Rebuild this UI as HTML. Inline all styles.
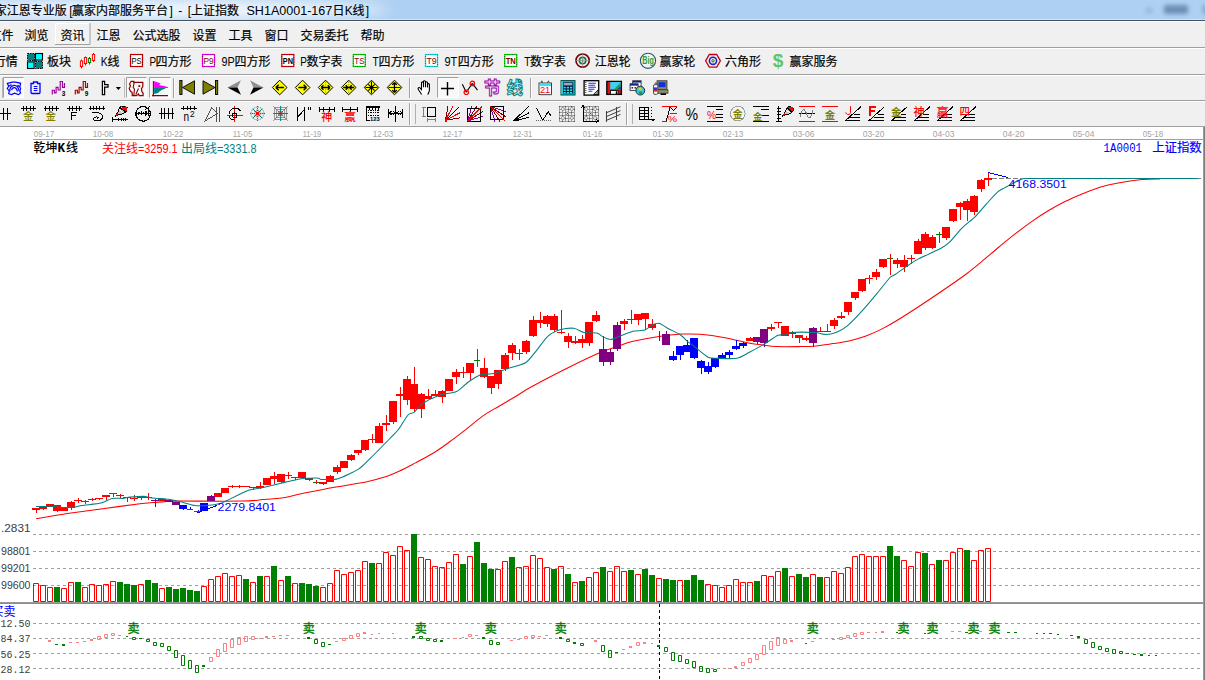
<!DOCTYPE html>
<html lang="zh"><head><meta charset="utf-8"><title>上证指数 SH1A0001-167日K线</title>
<style>
html,body{margin:0;padding:0;background:#fff;overflow:hidden}
body{width:1205px;height:680px;font-family:"Liberation Sans",sans-serif}
svg{display:block}
text{white-space:pre}
.cj{font-family:"Liberation Sans","Noto Sans CJK SC",sans-serif}
</style></head><body>
<svg width="1205" height="680" viewBox="0 0 1205 680">
<defs>
<filter id="blur3" x="-50%" y="-50%" width="200%" height="200%"><feGaussianBlur stdDeviation="2.2"/></filter>
<filter id="blur8" x="-20%" y="-100%" width="140%" height="300%"><feGaussianBlur stdDeviation="7"/></filter>
</defs>
<rect x="0" y="0" width="1205" height="680" fill="#ffffff"/>
<rect x="0" y="0" width="1205" height="20" fill="#aed0f2"/>
<ellipse cx="160" cy="10" rx="228" ry="10" fill="#ffffff" opacity="0.85" filter="url(#blur8)"/>
<rect x="0" y="19" width="1205" height="1" fill="#cfe3f7"/>
<rect x="0" y="20" width="1205" height="1" fill="#44515f"/>
<g filter="url(#blur3)"><rect x="1164" y="5" width="24" height="9" rx="2" fill="#6c8fb6"/><rect x="1146" y="8" width="6" height="5" fill="#93b4d8"/><rect x="1203" y="5" width="4" height="9" fill="#7f9fc4"/></g>
<rect x="0" y="21" width="1205" height="26" fill="#f0f0f0"/>
<rect x="0" y="21" width="1205" height="1" fill="#fafafa"/>
<rect x="0" y="47" width="1205" height="1" fill="#a0a0a0"/>
<rect x="0" y="48" width="1205" height="1" fill="#ffffff"/>
<rect x="0" y="49" width="1205" height="25" fill="#f0f0f0"/>
<rect x="0" y="74" width="1205" height="1" fill="#a0a0a0"/>
<rect x="0" y="75" width="1205" height="1" fill="#ffffff"/>
<rect x="0" y="76" width="1205" height="24" fill="#f0f0f0"/>
<rect x="0" y="100" width="1205" height="1" fill="#a0a0a0"/>
<rect x="0" y="101" width="1205" height="1" fill="#ffffff"/>
<rect x="0" y="102" width="1205" height="24" fill="#f0f0f0"/>
<rect x="0" y="126" width="1205" height="1" fill="#a0a0a0"/>
<text class="cj" x="-5.2" y="15.3" font-size="12" fill="#000" stroke="#000" stroke-width="0.17">家江恩专业版</text>
<text x="69.30" y="15.30" font-family="Liberation Sans" font-size="12" fill="#000">[</text>
<text class="cj" x="72.1" y="15.3" font-size="12" fill="#000" stroke="#000" stroke-width="0.17">赢家内部服务平台</text>
<text x="169.60" y="15.30" font-family="Liberation Sans" font-size="12" fill="#000">]</text>
<text x="178.20" y="15.30" font-family="Liberation Sans" font-size="12" fill="#000">-</text>
<text x="187.80" y="15.30" font-family="Liberation Sans" font-size="12" fill="#000">[</text>
<text class="cj" x="191.0" y="15.3" font-size="12" fill="#000" stroke="#000" stroke-width="0.17">上证指数</text>
<text x="246.50" y="15.30" font-family="Liberation Sans" font-size="12" fill="#000" textLength="85.8" lengthAdjust="spacingAndGlyphs">SH1A0001-167</text>
<text class="cj" x="332.4" y="15.3" font-size="12" fill="#000" stroke="#000" stroke-width="0.17">日</text>
<text x="344.80" y="15.30" font-family="Liberation Sans" font-size="12" fill="#000">K</text>
<text class="cj" x="352.4" y="15.3" font-size="12" fill="#000" stroke="#000" stroke-width="0.17">线</text>
<text x="365.80" y="15.30" font-family="Liberation Sans" font-size="12" fill="#000">]</text>
<text class="cj" x="-10.5" y="39.7" font-size="12" fill="#000" stroke="#000" stroke-width="0.17">文件</text>
<text class="cj" x="24.6" y="39.7" font-size="12" fill="#000" stroke="#000" stroke-width="0.17">浏览</text>
<rect x="55" y="23" width="35.5" height="22" fill="#f2f2f2"/><path d="M55.5 45V23.5H90.5" stroke="#ffffff" fill="none"/><path d="M55 44.5H90V23" stroke="#a0a0a0" fill="none"/>
<text class="cj" x="60.6" y="39.7" font-size="12" fill="#000" stroke="#000" stroke-width="0.17">资讯</text>
<text class="cj" x="96.6" y="39.7" font-size="12" fill="#000" stroke="#000" stroke-width="0.17">江恩</text>
<text class="cj" x="132.6" y="39.7" font-size="12" fill="#000" stroke="#000" stroke-width="0.17">公式选股</text>
<text class="cj" x="192.6" y="39.7" font-size="12" fill="#000" stroke="#000" stroke-width="0.17">设置</text>
<text class="cj" x="228.6" y="39.7" font-size="12" fill="#000" stroke="#000" stroke-width="0.17">工具</text>
<text class="cj" x="264.4" y="39.7" font-size="12" fill="#000" stroke="#000" stroke-width="0.17">窗口</text>
<text class="cj" x="300.6" y="39.7" font-size="12" fill="#000" stroke="#000" stroke-width="0.17">交易委托</text>
<text class="cj" x="360.6" y="39.7" font-size="12" fill="#000" stroke="#000" stroke-width="0.17">帮助</text>
<text class="cj" x="-6.2" y="66.2" font-size="12" fill="#000" stroke="#000" stroke-width="0.17">行情</text>
<text class="cj" x="47.0" y="66.2" font-size="12" fill="#000" stroke="#000" stroke-width="0.17">板块</text>
<text x="100.80" y="66.20" font-family="Liberation Sans" font-size="12" fill="#000" textLength="7" lengthAdjust="spacingAndGlyphs">K</text>
<text class="cj" x="107.4" y="66.2" font-size="12" fill="#000" stroke="#000" stroke-width="0.17">线</text>
<text x="149.40" y="66.20" font-family="Liberation Sans" font-size="12" fill="#000" textLength="6.6" lengthAdjust="spacingAndGlyphs">P</text>
<text class="cj" x="155.6" y="66.2" font-size="12" fill="#000" stroke="#000" stroke-width="0.17">四方形</text>
<text x="221.60" y="66.20" font-family="Liberation Sans" font-size="12" fill="#000" textLength="13.2" lengthAdjust="spacingAndGlyphs">9P</text>
<text class="cj" x="234.6" y="66.2" font-size="12" fill="#000" stroke="#000" stroke-width="0.17">四方形</text>
<text x="300.20" y="66.20" font-family="Liberation Sans" font-size="12" fill="#000" textLength="6.6" lengthAdjust="spacingAndGlyphs">P</text>
<text class="cj" x="306.6" y="66.2" font-size="12" fill="#000" stroke="#000" stroke-width="0.17">数字表</text>
<text x="372.40" y="66.20" font-family="Liberation Sans" font-size="12" fill="#000" textLength="6.2" lengthAdjust="spacingAndGlyphs">T</text>
<text class="cj" x="378.6" y="66.2" font-size="12" fill="#000" stroke="#000" stroke-width="0.17">四方形</text>
<text x="444.40" y="66.20" font-family="Liberation Sans" font-size="12" fill="#000" textLength="12.8" lengthAdjust="spacingAndGlyphs">9T</text>
<text class="cj" x="457.8" y="66.2" font-size="12" fill="#000" stroke="#000" stroke-width="0.17">四方形</text>
<text x="524.20" y="66.20" font-family="Liberation Sans" font-size="12" fill="#000" textLength="6.2" lengthAdjust="spacingAndGlyphs">T</text>
<text class="cj" x="530.0" y="66.2" font-size="12" fill="#000" stroke="#000" stroke-width="0.17">数字表</text>
<text class="cj" x="594.8" y="66.2" font-size="12" fill="#000" stroke="#000" stroke-width="0.17">江恩轮</text>
<text class="cj" x="659.5" y="66.2" font-size="12" fill="#000" stroke="#000" stroke-width="0.17">赢家轮</text>
<text class="cj" x="725.0" y="66.2" font-size="12" fill="#000" stroke="#000" stroke-width="0.17">六角形</text>
<text class="cj" x="789.5" y="66.2" font-size="12" fill="#000" stroke="#000" stroke-width="0.17">赢家服务</text>
<g transform="translate(27,53)"><rect x="0.5" y="0.5" width="7" height="7" fill="#008080" stroke="#000" stroke-width="1" stroke-dasharray="1.5 1"/><rect x="8.5" y="0.5" width="7" height="6.6" fill="#00ffff" stroke="#000" stroke-width="1.1"/><rect x="0.5" y="8.9" width="6.6" height="6.6" fill="#00ffff" stroke="#000" stroke-width="1.1"/><rect x="8.5" y="8.5" width="7" height="7" fill="#008080" stroke="#000" stroke-width="1" stroke-dasharray="1.5 1"/><rect x="6.8" y="6.8" width="2.2" height="2.2" fill="#003c3c" stroke="none" stroke-width="1"/></g>
<g transform="translate(0,0)"><path d="M81.5 59.5V61M81.5 66.5V68.5" stroke="#ff0000" stroke-width="1" fill="none"/><rect x="80.4" y="61" width="2.2" height="5.5" fill="#fff" stroke="#ff0000" stroke-width="1"/><path d="M85.5 56.5V57.5M85.5 63.5V65.5" stroke="#ff0000" stroke-width="1" fill="none"/><rect x="84.4" y="57.5" width="2.2" height="6.0" fill="#fff" stroke="#ff0000" stroke-width="1"/><path d="M89.5 57V58.5M89.5 62.5V64.5" stroke="#008000" stroke-width="1" fill="none"/><rect x="88.4" y="58.5" width="2.2" height="4.0" fill="#fff" stroke="#008000" stroke-width="1"/><path d="M93.5 53V54.5M93.5 60.5V62" stroke="#ff0000" stroke-width="1" fill="none"/><rect x="92.4" y="54.5" width="2.2" height="6.0" fill="#fff" stroke="#ff0000" stroke-width="1"/></g>
<g transform="translate(130,54)"><rect x="0.5" y="0.5" width="12" height="12" fill="#fff" stroke="#e00000" stroke-width="1.2"/><rect x="0.5" y="0.5" width="12" height="12" fill="none" stroke="#000" stroke-width="1.2" stroke-dasharray="1 1.4" opacity="0.45"/><text x="1.5" y="10.2" font-family="Liberation Sans" font-size="9.6" font-weight="normal" fill="#000" textLength="10.2" lengthAdjust="spacingAndGlyphs">PS</text></g>
<g transform="translate(202,54)"><rect x="0.5" y="0.5" width="12" height="12" fill="#fff" stroke="#ff00ff" stroke-width="1.2"/><rect x="0.5" y="0.5" width="12" height="12" fill="none" stroke="#000" stroke-width="1.2" stroke-dasharray="1 1.4" opacity="0.45"/><text x="1.5" y="10.2" font-family="Liberation Sans" font-size="9.6" font-weight="normal" fill="#800000" textLength="10.2" lengthAdjust="spacingAndGlyphs">P9</text></g>
<g transform="translate(281.3,54)"><rect x="0.5" y="0.5" width="12" height="12" fill="#fff" stroke="#e00000" stroke-width="1.2"/><rect x="0.5" y="0.5" width="12" height="12" fill="none" stroke="#000" stroke-width="1.2" stroke-dasharray="1 1.4" opacity="0.45"/><text x="1.5" y="10.2" font-family="Liberation Sans" font-size="9.6" font-weight="bold" fill="#000" textLength="10.2" lengthAdjust="spacingAndGlyphs">PN</text></g>
<g transform="translate(352.8,54)"><rect x="0.5" y="0.5" width="12" height="12" fill="#fff" stroke="#00e000" stroke-width="1.2"/><rect x="0.5" y="0.5" width="12" height="12" fill="none" stroke="#000" stroke-width="1.2" stroke-dasharray="1 1.4" opacity="0.45"/><text x="1.5" y="10.2" font-family="Liberation Sans" font-size="9.6" font-weight="normal" fill="#800000" textLength="10.2" lengthAdjust="spacingAndGlyphs">TS</text></g>
<g transform="translate(425,54)"><rect x="0.5" y="0.5" width="12" height="12" fill="#fff" stroke="#00f0f0" stroke-width="1.2"/><rect x="0.5" y="0.5" width="12" height="12" fill="none" stroke="#000" stroke-width="1.2" stroke-dasharray="1 1.4" opacity="0.45"/><text x="1.5" y="10.2" font-family="Liberation Sans" font-size="9.6" font-weight="normal" fill="#800000" textLength="10.2" lengthAdjust="spacingAndGlyphs">T9</text></g>
<g transform="translate(504.2,54)"><rect x="0.5" y="0.5" width="12" height="12" fill="#fff" stroke="#00e000" stroke-width="1.2"/><rect x="0.5" y="0.5" width="12" height="12" fill="none" stroke="#000" stroke-width="1.2" stroke-dasharray="1 1.4" opacity="0.45"/><text x="1.5" y="10.2" font-family="Liberation Sans" font-size="9.6" font-weight="bold" fill="#800000" textLength="10.2" lengthAdjust="spacingAndGlyphs">TN</text></g>
<g transform="translate(582.6,60.6)"><circle r="6.6" fill="none" stroke="#800000" stroke-width="1.7"/><circle r="3.2" fill="none" stroke="#008040" stroke-width="1.6"/><circle r="1.2" fill="#ff6060"/><path d="M-7 0H7M0 -7V7" stroke="#909090" stroke-width="0.8" fill="none"/></g>
<g transform="translate(648,60.8)"><circle r="7.6" fill="#f4f4f4" stroke="#1f5a7a" stroke-width="1.1"/><text x="-5.8" y="3.3" font-family="Liberation Sans" font-size="10" font-weight="bold" fill="#2f9e2f" textLength="11.6" lengthAdjust="spacingAndGlyphs">Big</text></g>
<g transform="translate(713,60.8)"><path d="M-7.4 0L-3.7 -6.3H3.7L7.4 0L3.7 6.3H-3.7Z" stroke="#c00020" stroke-width="1.3" fill="none"/><circle r="3.6" fill="none" stroke="#2020c0" stroke-width="1.6"/><circle r="1.2" fill="#fff" stroke="#008000" stroke-width="1"/></g>
<g transform="translate(0,0)"><text x="772.8" y="66.6" font-family="Liberation Sans" font-size="19" font-weight="bold" fill="#62c462" textLength="10.6" lengthAdjust="spacingAndGlyphs">$</text></g>
<rect x="2" y="78" width="1" height="20" fill="#b8b8b8"/>
<rect x="3" y="77" width="21" height="21" fill="#f8f8f8"/><path d="M3.5 98V77.5H24" stroke="#a0a0a0" fill="none"/><path d="M3.5 97.5H23.5V77.5" stroke="#ffffff" fill="none"/>
<g transform="translate(7,81)"><path d="M0.3 2.3L5.5 1.1H8.7L13.6 2.3L12.8 6L13.6 7.5L12.8 10.1L13.6 11.9L11.6 13.6L7.5 12.2L4.6 13.6L1.7 12.7L2.3 10.1L0.3 7.5L1.7 5.2Z" stroke="#0000ff" stroke-width="1.2" fill="none"/><path d="M2.9 10.4C2.6 8 3.5 5 7 4.3C10 4 11.5 7 12.2 10.1M4.6 9.2C5 7.4 6 6.6 7.2 6.6C8.8 6.6 10 8.4 10.4 10.7M1.7 5.2L4.5 3.5M12.8 6L10.5 4.2" stroke="#0000ff" stroke-width="1.2" fill="none"/></g>
<g transform="translate(30,81)"><path d="M1 2.5H3.5V1H7.5V2.5H10V11.5Q10 12.5 9 12.5H2Q1 12.5 1 11.5Z" stroke="#0000ff" stroke-width="1.3" fill="none"/><path d="M3.8 5.5H7.4M3.8 7.5H7.4M3.8 9.5H7.4" stroke="#0000ff" stroke-width="1.1" fill="none"/></g>
<g transform="translate(51.5,81)"><path d="M0.8 13.6V9.2H2.9V11.9H4.6V6.3H6.6V9H8.7V0.5H11V6.3H13V2" stroke="#a000a0" stroke-width="1.15" fill="none"/><text x="10.2" y="14.9" font-family="Liberation Sans" font-size="6.5" font-weight="bold" fill="#000" textLength="3.6" lengthAdjust="spacingAndGlyphs">3</text></g>
<g transform="translate(74.5,81)"><path d="M0.8 13.6V9.2H2.9V11.9H4.6V6.3H6.6V9H8.7V0.5H11V6.3H13V2" stroke="#a00000" stroke-width="1.15" fill="none"/><text x="10.2" y="14.9" font-family="Liberation Sans" font-size="6.5" font-weight="bold" fill="#000" textLength="3.6" lengthAdjust="spacingAndGlyphs">9</text></g>
<g transform="translate(101,81)"><path d="M1.4 0.4H3.6V3.7H7V6H3.6V13.6H1.4Z" stroke="#000" stroke-width="1.25" fill="#fff"/><path d="M14.8 6h5.2l-2.6 3z" fill="#000"/></g>
<rect x="124" y="78" width="1" height="20" fill="#c0c0c0"/>
<rect x="126" y="77" width="21" height="21" fill="#f8f8f8"/><path d="M126.5 98V77.5H147" stroke="#a0a0a0" fill="none"/><path d="M126.5 97.5H146.5V77.5" stroke="#ffffff" fill="none"/>
<g transform="translate(129,81)"><path d="M2.2 0.3H4.8V1.3H13.8V5.6L12.5 7.6L12.8 10.3L14.1 12.3V14.6H10.2L9.5 12.9L7.5 14.6H3.2V11.6L1.5 10.3L0.2 7.6L1.5 5L0.5 3Z" stroke="#8b0000" stroke-width="1.2" fill="none"/><path d="M5.2 1.3L4.2 6.3L5.5 8.3L4.8 14.3M9.5 7.6L6.8 13.6" stroke="#8b0000" stroke-width="1.1" fill="none"/><rect x="9.4" y="4.2" width="1.8" height="1.8" fill="#8b0000" stroke="none" stroke-width="1"/></g>
<rect x="149" y="77" width="22" height="21" fill="#f8f8f8"/><path d="M149.5 98V77.5H171" stroke="#a0a0a0" fill="none"/><path d="M149.5 97.5H170.5V77.5" stroke="#ffffff" fill="none"/>
<g transform="translate(152,80)"><path d="M2.1 1.2L6.1 2.6L8.7 3.6L7.1 5L13.1 6.3L16 7.3V8.1H2.1z" fill="#ff00ff"/><path d="M2.1 8.1H13.7L12.4 8.9L9.4 9.9L8.1 11.3L5.8 12.3L7.7 12.6L4.1 13.6L2.1 13.9z" fill="#008080"/><path d="M1.4 1V16.6M0.1 15.6H16M0.1 15.6L1.8 14.4" stroke="#8b0000" stroke-width="1.1" fill="none"/></g>
<rect x="173" y="78" width="1" height="20" fill="#a0a0a0"/>
<rect x="174" y="78" width="1" height="20" fill="#ffffff"/>
<g transform="translate(179,80)"><rect x="0.8" y="0.5" width="2.2" height="14" fill="#808000" stroke="#000" stroke-width="0.9"/><path d="M3.5 7.5L15.5 0.8V14.2Z" stroke="#000" stroke-width="0.9" fill="#808000"/></g>
<g transform="translate(202.5,80)"><rect x="13" y="0.5" width="2.2" height="14" fill="#808000" stroke="#000" stroke-width="0.9"/><path d="M12.5 7.5L0.5 0.8V14.2Z" stroke="#000" stroke-width="0.9" fill="#808000"/></g>
<g transform="translate(227.5,80)"><path d="M0 7.5L13.5 0.3L10 7.5z" fill="#909090"/><path d="M0 7.5L13.5 14.7L10 7.5z" fill="#000"/></g>
<g transform="translate(250,80)"><path d="M13.5 7.5L0 0.3L3.5 7.5z" fill="#909090"/><path d="M13.5 7.5L0 14.7L3.5 7.5z" fill="#000"/></g>
<g transform="translate(279.7,87.5)"><path d="M-7.3 0L0 -7.3L7.3 0L0 7.3Z" stroke="#000" stroke-width="1" fill="#ffff00"/><path d="M-4 0H4.2M-4 0L-1 -2.8M-4 0L-1 2.8" stroke="#000" stroke-width="1.3" fill="none"/></g>
<g transform="translate(302.6,87.5)"><path d="M-7.3 0L0 -7.3L7.3 0L0 7.3Z" stroke="#000" stroke-width="1" fill="#ffff00"/><path d="M4 0H-4.2M4 0L1 -2.8M4 0L1 2.8" stroke="#000" stroke-width="1.3" fill="none"/></g>
<g transform="translate(325.6,87.5)"><path d="M-7.3 0L0 -7.3L7.3 0L0 7.3Z" stroke="#000" stroke-width="1" fill="#ffff00"/><path d="M0 -6V6" stroke="#909060" stroke-width="0.8" fill="none" stroke-dasharray="1.5 1"/><path d="M-4.5 0H4.5M-4.5 0L-2.2 -2.3M-4.5 0L-2.2 2.3M4.5 0L2.2 -2.3M4.5 0L2.2 2.3" stroke="#000" stroke-width="1.3" fill="none"/></g>
<g transform="translate(348.7,87.5)"><path d="M-7.3 0L0 -7.3L7.3 0L0 7.3Z" stroke="#000" stroke-width="1" fill="#ffff00"/><path d="M0 -6V6" stroke="#909060" stroke-width="0.8" fill="none" stroke-dasharray="1.5 1"/><path d="M-5.5 0H5.5M-0.8 0L-3 -2.3M-0.8 0L-3 2.3M0.8 0L3 -2.3M0.8 0L3 2.3" stroke="#000" stroke-width="1.3" fill="none"/></g>
<g transform="translate(371.5,87.5)"><path d="M-7.3 0L0 -7.3L7.3 0L0 7.3Z" stroke="#000" stroke-width="1" fill="#ffff00"/><path d="M-6 0H6M0 -6V6M-3.2 -3.2L3.2 3.2M-3.2 3.2L3.2 -3.2" stroke="#000" stroke-width="1.1" fill="none"/></g>
<g transform="translate(394.5,87.5)"><path d="M-7.3 0L0 -7.3L7.3 0L0 7.3Z" stroke="#000" stroke-width="1" fill="#ffff00"/><path d="M-6 0H6" stroke="#000" stroke-width="0.9" fill="none"/><path d="M0 -5V5M0 -5L-2.3 -2.6M0 -5L2.3 -2.6M0 5L-2.3 2.6M0 5L2.3 2.6" stroke="#000" stroke-width="1.3" fill="none"/></g>
<rect x="409" y="78" width="1" height="20" fill="#a0a0a0"/>
<rect x="410" y="78" width="1" height="20" fill="#ffffff"/>
<g transform="translate(416.5,80)"><path d="M5.2 14.5L2 9.8C0.8 8 2.5 6.8 3.8 8.2L5 9.6V3C5 1.5 7 1.5 7 3V7.2V1.8C7 0.3 9 0.3 9 1.8V7.2V2.8C9 1.4 11 1.4 11 2.8V7.6V4.6C11 3.3 12.9 3.3 12.9 4.6V10C12.9 12 12 13 11.2 14.5" stroke="#000" stroke-width="1.1" fill="#fff"/></g>
<rect x="437" y="77" width="22" height="21" fill="#f8f8f8"/><path d="M437.5 98V77.5H459" stroke="#a0a0a0" fill="none"/><path d="M437.5 97.5H458.5V77.5" stroke="#ffffff" fill="none"/>
<g transform="translate(440,81)"><path d="M1 7.5H14M7.5 1V14.5" stroke="#000" stroke-width="1.4" fill="none"/></g>
<g transform="translate(461.5,80)"><path d="M0.8 4.2L4.8 12.3M4.8 12.3L10.8 3.4M10.8 3.4L16 10.2" stroke="#000" stroke-width="1.1" fill="none"/><circle cx="4.8" cy="12.3" r="2.2" fill="none" stroke="#ff0000" stroke-width="1.2"/><circle cx="10.8" cy="3.4" r="2.2" fill="none" stroke="#ff0000" stroke-width="1.2"/></g>
<g transform="translate(484,80)"><text class="cj" x="0" y="14" font-size="16.5" font-weight="bold" fill="#f4f4f4" stroke="#a000a0" stroke-width="0.96">节</text></g>
<g transform="translate(506.6,80)"><text class="cj" x="0" y="14" font-size="16.5" font-weight="bold" fill="#f4f4f4" stroke="#008080" stroke-width="0.96">线</text></g>
<rect x="530" y="78" width="1" height="20" fill="#a0a0a0"/>
<rect x="531" y="78" width="1" height="20" fill="#ffffff"/>
<g transform="translate(538,80)"><rect x="1" y="3" width="12.5" height="11.5" fill="#fff" stroke="#404040" stroke-width="1"/><rect x="1.5" y="3.5" width="11.5" height="2.6" fill="#40e0f0" stroke="none" stroke-width="1"/><path d="M3 3.2L3.8 0.8L4.6 3.2M9.6 3.2L10.4 0.8L11.2 3.2" stroke="#404040" stroke-width="0.9" fill="#fff"/><text x="1.9" y="13.4" font-family="Liberation Sans" font-size="9" font-weight="normal" fill="#ff0000" textLength="10.4" lengthAdjust="spacingAndGlyphs">21</text><path d="M2 14.8H14" stroke="#808080" stroke-width="0.8" fill="none"/></g>
<g transform="translate(560.4,80)"><rect x="0.6" y="0.6" width="14" height="14.4" fill="#00c8c8" stroke="#004848" stroke-width="1"/><rect x="2.4" y="2.2" width="10.4" height="11.4" fill="#001850" stroke="none" stroke-width="1"/><rect x="3.2" y="2.8" width="8.8" height="2.6" fill="#a0a8a8" stroke="none" stroke-width="1"/><rect x="3.2" y="6.8" width="2.2" height="1.6" fill="#30d8d8" stroke="none" stroke-width="1"/><rect x="3.2" y="9.4" width="2.2" height="1.6" fill="#30d8d8" stroke="none" stroke-width="1"/><rect x="3.2" y="12.0" width="2.2" height="1.6" fill="#30d8d8" stroke="none" stroke-width="1"/><rect x="6.4" y="6.8" width="2.2" height="1.6" fill="#30d8d8" stroke="none" stroke-width="1"/><rect x="6.4" y="9.4" width="2.2" height="1.6" fill="#30d8d8" stroke="none" stroke-width="1"/><rect x="6.4" y="12.0" width="2.2" height="1.6" fill="#30d8d8" stroke="none" stroke-width="1"/><rect x="9.600000000000001" y="6.8" width="2.2" height="1.6" fill="#30d8d8" stroke="none" stroke-width="1"/><rect x="9.600000000000001" y="9.4" width="2.2" height="1.6" fill="#30d8d8" stroke="none" stroke-width="1"/><rect x="9.600000000000001" y="12.0" width="2.2" height="1.6" fill="#30d8d8" stroke="none" stroke-width="1"/><path d="M1.6 1.2V14" stroke="#60f0f0" stroke-width="1" fill="none"/></g>
<g transform="translate(583.4,80)"><rect x="0.7" y="0.7" width="14.6" height="14.4" fill="#fff" stroke="#000" stroke-width="1.3"/><path d="M2.4 2V14" stroke="#404040" stroke-width="1.2" fill="none" stroke-dasharray="1 1"/><path d="M5 3.2H12.5M5 5.2H11.5M5 7.2H12.5M5 9.2H11M5 11.2H9" stroke="#2030e0" stroke-width="1.1" fill="none"/><path d="M10 14.5L14.8 9.8V14.5z" fill="#a0a0a0" stroke="#000" stroke-width="0.8"/></g>
<g transform="translate(606,80)"><rect x="0.8" y="1.4" width="14.6" height="13" fill="#e01010" stroke="#000" stroke-width="1.3"/><rect x="4.2" y="2" width="10.6" height="7.2" fill="#40d0f0" stroke="none" stroke-width="1"/><path d="M14.8 2.5L8 9.2H14.8z" fill="#20a040"/><path d="M14.8 6L11.5 9.2H14.8z" fill="#1030c0"/><rect x="4.6" y="10.6" width="7.6" height="3.6" fill="#fff" stroke="#000" stroke-width="0.8"/><rect x="9.8" y="11.2" width="1.6" height="3" fill="#000" stroke="none" stroke-width="1"/></g>
<g transform="translate(629.5,80)"><rect x="3.2" y="0.8" width="8.4" height="7" fill="#fff" stroke="#303030" stroke-width="0.9"/><rect x="3.2" y="0.8" width="8.4" height="1.8" fill="#102080" stroke="none" stroke-width="1"/><rect x="0.6" y="3.8" width="8" height="6.6" fill="#fff" stroke="#303030" stroke-width="0.9"/><rect x="0.6" y="3.8" width="8" height="1.8" fill="#102080" stroke="none" stroke-width="1"/><rect x="2" y="7" width="1.6" height="1.6" fill="#303030" stroke="none" stroke-width="1"/><rect x="5" y="7" width="1.6" height="1.6" fill="#303030" stroke="none" stroke-width="1"/><circle cx="10.8" cy="10.6" r="4.4" fill="#30c8d8" stroke="#203040" stroke-width="1"/><path d="M8.5 8.5L11 7.5L13 9L11.5 10.5L9.5 10z" fill="#e0d020"/><path d="M9 12L11.5 11.5L13 13L10.8 14.6z" fill="#209040"/></g>
<g transform="translate(652.5,80)"><rect x="4.6" y="0.8" width="9.8" height="8.6" fill="#909070" stroke="#404030" stroke-width="1"/><rect x="6" y="2.2" width="7" height="5" fill="#1030e0" stroke="none" stroke-width="1"/><rect x="4" y="9.8" width="11.4" height="3.4" fill="#909070" stroke="#404030" stroke-width="0.9"/><rect x="8" y="13.4" width="5.5" height="1.6" fill="#000" stroke="none" stroke-width="1"/><rect x="1" y="4.6" width="4.4" height="9.8" fill="#f4f4f4" stroke="#404040" stroke-width="0.9" rx="1.5"/><rect x="1.4" y="7.4" width="3.6" height="2.6" fill="#2040d0" stroke="none" stroke-width="1"/><rect x="1.4" y="10" width="3.6" height="1.6" fill="#e02020" stroke="none" stroke-width="1"/><path d="M2 4.4L3.2 2.6L4.4 4.4" stroke="#404040" stroke-width="0.9" fill="none"/></g>
<g transform="translate(0,106)" shape-rendering="crispEdges"><path d="M0 7.5H11.3M3.2 2V13.5M7.6 2V13.5" stroke="#000" stroke-width="1" fill="none"/></g>
<g transform="translate(20.5,106)" shape-rendering="crispEdges"><path d="M0.5 2.8H15.5M2.7 0.3999999999999999V5.199999999999999M5.9 0.3999999999999999V5.199999999999999M9.7 0.3999999999999999V5.199999999999999M12.9 0.3999999999999999V5.199999999999999" stroke="#000" stroke-width="1" fill="none"/><text class="cj" x="2.4" y="14.4" font-size="10.5" font-weight="500" fill="#808000">金</text></g>
<g transform="translate(43,106)" shape-rendering="crispEdges"><path d="M0.5 2.8H15.5M2.7 0.3999999999999999V5.199999999999999M6.2 0.3999999999999999V5.199999999999999M9.4 0.3999999999999999V5.199999999999999M13.2 0.3999999999999999V5.199999999999999" stroke="#000" stroke-width="1" fill="none"/><text class="cj" x="2.4" y="14.4" font-size="10.5" font-weight="500" fill="#808000">金</text></g>
<g transform="translate(66.3,106)" shape-rendering="crispEdges"><path d="M0.5 2.8H15.5M2.7 0.3999999999999999V5.199999999999999M5.9 0.3999999999999999V5.199999999999999M9.7 0.3999999999999999V5.199999999999999M12.9 0.3999999999999999V5.199999999999999" stroke="#000" stroke-width="1" fill="none"/><path d="M5.5 13.5V6.2H11M5.5 9.6H10" stroke="#000" stroke-width="1" fill="none"/></g>
<g transform="translate(89.5,106)" shape-rendering="crispEdges"><path d="M-0.6 2.1H15.4M0.9 0.1V4.4M3.8 0.1V4.4M7 0.1V4.4M10.2 0.1V4.4M14.3 0.1V4.4" stroke="#000" stroke-width="1" fill="none"/><path d="M2.1 6.8H9C11.9 7 13.7 9.4 13.1 11.7C11.9 14.8 7.9 15.6 5 14.6C3.2 13.6 3.6 11.7 6.1 11.1C9 10.5 9.2 12.3 7.6 12.6" stroke="#000" stroke-width="1" fill="none"/></g>
<g transform="translate(112,106)" shape-rendering="crispEdges"><g transform="translate(0,0) scale(1.0)"><path d="M3.4 10.2L6.3 5.3L8 1.2L9.8 0.1L15 1.8L14.7 4.7L12.7 6.8L9.2 8.5L5.7 9.1z" fill="#c8c8c8" stroke="#000" stroke-width="1"/><path d="M9.2 0.2L12.7 1.2L13.6 0.1L15 1.8L14.7 4.7L12.7 5.2L9.8 2.2z" fill="#ff0000"/><path d="M8 1.4L13.2 5.8" stroke="#000" stroke-width="1.3"/><path d="M7.2 3.4L11.5 7.2" stroke="#fff" stroke-width="1"/><path d="M3.2 10.4L5.1 7L6.9 7.9L5.7 9.1z" fill="#ff0000"/></g><path d="M0.2 13.4H15.9M0.5 11.1V15.8M6.6 11.6V15.2M9.8 11.6V15.2M11.5 11.6V15.2M13.6 11.6V15.2" stroke="#000" stroke-width="1" fill="none"/></g>
<g transform="translate(135.5,106)" shape-rendering="crispEdges"><circle cx="7.6" cy="7.9" r="7.3" fill="none" stroke="#000" stroke-width="1.2"/><path d="M0.5 7H14.6M2.6 5.6V8.6M4.4 6V8M6 4.8V9.4M7.8 5.6V8.4M9.6 4.6V9.6M11.2 5.4V8.6M12.8 4.4V9.8" stroke="#000" stroke-width="1" fill="none"/><path d="M10 3.6L14.4 0.4" stroke="#000" stroke-width="1" fill="none"/></g>
<g transform="translate(158,106)" shape-rendering="crispEdges"><path d="M0.5 7.5H15.8M3.1 2V13.2M6.9 2V13.2M10.6 2V13.2M14 2V13.2" stroke="#000" stroke-width="1" fill="none"/></g>
<g transform="translate(181,106)" shape-rendering="crispEdges"><path d="M0.3 2.2H15.6M2.5 0.20000000000000018V4.2M6 0.20000000000000018V4.2M9.8 0.20000000000000018V4.2M13.2 0.20000000000000018V4.2" stroke="#000" stroke-width="1" fill="none"/><text x="2.6" y="15.4" font-family="Liberation Sans" font-size="12" font-weight="normal" fill="#000" textLength="5.6" lengthAdjust="spacingAndGlyphs">n</text><text x="9" y="10.6" font-family="Liberation Sans" font-size="8.5" font-weight="normal" fill="#000" textLength="4.6" lengthAdjust="spacingAndGlyphs">2</text></g>
<g transform="translate(204.5,106)" shape-rendering="crispEdges"><path d="M0.5 15L13 7.5L7 1.8Z" stroke="#505050" stroke-width="1" fill="none"/><path d="M11.6 0.5V15.5M15.4 0.5V15.5" stroke="#505050" stroke-width="1" fill="none"/></g>
<g transform="translate(227,106)" shape-rendering="crispEdges"><path d="M0 9.3H15.8M7.6 0V15.5" stroke="#ff0000" stroke-width="1" fill="none"/><circle cx="7.6" cy="9.3" r="2.3" fill="none" stroke="#000" stroke-width="1.1"/><path d="M13.5 5C11 0.5 3 1.5 2 8C1.5 11 3.5 13.5 6.5 14" stroke="#000" stroke-width="1" fill="none"/></g>
<g transform="translate(249.7,106)"><circle cx="7.8" cy="7.5" r="3.4" fill="none" stroke="#505050" stroke-width="0.8" stroke-dasharray="1 1"/><circle cx="7.8" cy="7.5" r="6.4" fill="none" stroke="#505050" stroke-width="0.8" stroke-dasharray="1 1"/><path d="M0.3 7.5H15.3M7.8 0V15" stroke="#ff0000" stroke-width="0.9" fill="none" stroke-dasharray="1.2 0.8"/><path d="M3 2.7L12.6 12.3M12.6 2.7L3 12.3" stroke="#008080" stroke-width="1.0" fill="none"/><path d="M5.8 5.5L9.8 9.5M9.8 5.5L5.8 9.5" stroke="#ff0000" stroke-width="1.2" fill="none"/><rect x="6.8" y="6.5" width="2" height="2" fill="#ff0000" stroke="none" stroke-width="1"/></g>
<g transform="translate(272.8,106)"><rect x="5.8" y="5.5" width="4" height="4" fill="none" stroke="#909090" stroke-width="0.9"/><rect x="3.8" y="3.5" width="8" height="8" fill="none" stroke="#909090" stroke-width="0.9"/><rect x="1.7999999999999998" y="1.5" width="12" height="12" fill="none" stroke="#909090" stroke-width="0.9"/><path d="M0.3 7.5H15.3M7.8 0V15" stroke="#008080" stroke-width="1.0" fill="none"/><path d="M0.8 0.5L14.8 14.5M14.8 0.5L0.8 14.5" stroke="#ff0000" stroke-width="1.0" fill="none" stroke-dasharray="1.2 0.9"/><rect x="6.8" y="6.5" width="2" height="2" fill="#ff0000" stroke="none" stroke-width="1"/></g>
<g transform="translate(297,106)" shape-rendering="crispEdges"><path d="M0.6 1.2V15M7.6 1.2V15M0.6 11L7.6 3.5M11 1.2V3.8M13.5 1.2V3.8" stroke="#000" stroke-width="1" fill="none"/></g>
<g transform="translate(319,106)" shape-rendering="crispEdges"><path d="M0.4 3H15.6M0.8 0.6V5.6M4.6 0.6V5.6M10.8 0.6V5.6M15.2 0.6V5.6" stroke="#000" stroke-width="1" fill="none"/><text class="cj" x="2.2" y="15.2" font-size="11" font-weight="500" fill="#ff0000">神</text></g>
<g transform="translate(342,106)" shape-rendering="crispEdges"><path d="M0.4 3H15.6M0.8 0.6V5.6M8 0.6V5.6M15.2 0.6V5.6" stroke="#000" stroke-width="1" fill="none"/><text class="cj" x="2.2" y="15.2" font-size="11.5" font-weight="500" fill="#ff0000">赢</text></g>
<g transform="translate(365.5,106)" shape-rendering="crispEdges"><path d="M0.3 1.2H14.2" stroke="#000" stroke-width="1.8" fill="none"/><path d="M1 1V14.6H4" stroke="#000" stroke-width="1" fill="none"/><path d="M2.5 4H14M2.5 6.6H14M2.5 9.2H14" stroke="#000" stroke-width="1" fill="none" stroke-dasharray="1.3 1"/><path d="M3.5 1.5V4M6.5 1.5V4M9.5 1.5V4M12.5 1.5V4" stroke="#000" stroke-width="1" fill="none"/><text x="4.6" y="15.2" font-family="Liberation Sans" font-size="5.5" font-weight="bold" fill="#000" textLength="9.6" lengthAdjust="spacingAndGlyphs">123</text></g>
<g transform="translate(387.6,106)" shape-rendering="crispEdges"><path d="M0.7 2.5V11.8M8.2 0V15.5M15 2.5V11.8" stroke="#000" stroke-width="1" fill="none"/><path d="M1.5 7H14.5M1.5 7L3.8 5.2M1.5 7L3.8 8.8M7.4 7L5.2 5.2M7.4 7L5.2 8.8M9 7L11.2 5.2M9 7L11.2 8.8M14.4 7L12.2 5.2M14.4 7L12.2 8.8" stroke="#000" stroke-width="1" fill="none"/></g>
<rect x="409" y="103" width="1" height="22" fill="#a0a0a0"/>
<rect x="410" y="103" width="1" height="22" fill="#ffffff"/>
<rect x="415" y="104" width="1" height="20" fill="#b0b0b0"/>
<g transform="translate(421.5,106)" shape-rendering="crispEdges"><rect x="5.5" y="1.2" width="8.6" height="9.4" fill="none" stroke="#000" stroke-width="1"/><path d="M0.3 1.2H4M0.3 10.6H4M2 1.2V10.6M5.5 12V15.5M14.1 12V15.5M5.5 13.8H14.1" stroke="#808080" stroke-width="1" fill="none"/></g>
<g transform="translate(444.5,106)" shape-rendering="crispEdges"><path d="M1 14.3L3.5 0" stroke="#800000" stroke-width="1" fill="none"/><path d="M1 14.3L8.5 0" stroke="#ff0000" stroke-width="1" fill="none"/><path d="M1 14.3L14.7 0.6" stroke="#000" stroke-width="1" fill="none"/><path d="M1 14.3L15.3 6.8" stroke="#ff0000" stroke-width="1" fill="none"/><path d="M1 14.3L15.3 11.8" stroke="#800000" stroke-width="1" fill="none"/><rect x="0" y="13" width="2.6" height="2.6" fill="#ff0000" stroke="none" stroke-width="1"/></g>
<g transform="translate(467,106)" shape-rendering="crispEdges"><path d="M0.6 15L5 0" stroke="#8000a0" stroke-width="1" fill="none"/><path d="M0.6 15L10 0" stroke="#800000" stroke-width="1" fill="none"/><path d="M0.6 15L15.6 5.6" stroke="#800000" stroke-width="1" fill="none"/><path d="M0.6 15L15.6 10.6" stroke="#8000a0" stroke-width="1" fill="none"/><rect x="0.6" y="2.5" width="13.2" height="12.5" fill="none" stroke="#000" stroke-width="1"/><path d="M0.6 15L15 0.6" stroke="#ff0000" stroke-width="1" fill="none"/></g>
<g transform="translate(490,106)" shape-rendering="crispEdges"><path d="M0.4 0.6L5 15.5" stroke="#8000a0" stroke-width="1" fill="none"/><path d="M0.4 0.6L10 15.5" stroke="#800000" stroke-width="1" fill="none"/><path d="M0.4 0.6L15.8 5.5" stroke="#8000a0" stroke-width="1" fill="none"/><path d="M0.4 0.6L15.8 10.8" stroke="#800000" stroke-width="1" fill="none"/><rect x="0.6" y="0.6" width="13.2" height="12.4" fill="none" stroke="#000" stroke-width="1"/><path d="M0.4 0.6L15.4 15.4" stroke="#ff0000" stroke-width="1" fill="none"/></g>
<g transform="translate(513,106)" shape-rendering="crispEdges"><path d="M0.5 15L16 0M0.5 15L16 6.8M0.5 15L16 11.2" stroke="#000" stroke-width="1" fill="none"/><path d="M0 15.4L5.5 11.5L5.8 14.6z" fill="#000"/></g>
<g transform="translate(536,106)" shape-rendering="crispEdges"><path d="M0.5 1.8L6.7 14.3L12.3 5.5L14.8 10" stroke="#000" stroke-width="1" fill="none"/><path d="M0 14.8H15" stroke="#606060" stroke-width="1" fill="none" stroke-dasharray="1 1"/></g>
<g transform="translate(559.3,105.5)" shape-rendering="crispEdges"><path d="M0.5 0V16M0 0.5H16M3.5 0V16M0 3.5H16M6.5 0V16M0 6.5H16M9.5 0V16M0 9.5H16M12.5 0V16M0 12.5H16M15.5 0V16M0 15.5H16" stroke="#9a9a9a" stroke-width="1" fill="none"/><rect x="0" y="0" width="1" height="1" fill="#ff0000" stroke="none" stroke-width="1"/><rect x="0" y="6" width="1" height="1" fill="#ff0000" stroke="none" stroke-width="1"/><rect x="0" y="12" width="1" height="1" fill="#ff0000" stroke="none" stroke-width="1"/><rect x="3" y="3" width="1" height="1" fill="#ff0000" stroke="none" stroke-width="1"/><rect x="3" y="9" width="1" height="1" fill="#ff0000" stroke="none" stroke-width="1"/><rect x="3" y="15" width="1" height="1" fill="#ff0000" stroke="none" stroke-width="1"/><rect x="6" y="0" width="1" height="1" fill="#ff0000" stroke="none" stroke-width="1"/><rect x="6" y="6" width="1" height="1" fill="#ff0000" stroke="none" stroke-width="1"/><rect x="6" y="12" width="1" height="1" fill="#ff0000" stroke="none" stroke-width="1"/><rect x="9" y="3" width="1" height="1" fill="#ff0000" stroke="none" stroke-width="1"/><rect x="9" y="9" width="1" height="1" fill="#ff0000" stroke="none" stroke-width="1"/><rect x="9" y="15" width="1" height="1" fill="#ff0000" stroke="none" stroke-width="1"/><rect x="12" y="0" width="1" height="1" fill="#ff0000" stroke="none" stroke-width="1"/><rect x="12" y="6" width="1" height="1" fill="#ff0000" stroke="none" stroke-width="1"/><rect x="12" y="12" width="1" height="1" fill="#ff0000" stroke="none" stroke-width="1"/><rect x="15" y="3" width="1" height="1" fill="#ff0000" stroke="none" stroke-width="1"/><rect x="15" y="9" width="1" height="1" fill="#ff0000" stroke="none" stroke-width="1"/><rect x="15" y="15" width="1" height="1" fill="#ff0000" stroke="none" stroke-width="1"/><circle cx="3.5" cy="3.5" r="1.6" fill="#e8e8e8" stroke="#808080" stroke-width="0.7" shape-rendering="auto"/><circle cx="12.5" cy="3.5" r="1.6" fill="#e8e8e8" stroke="#808080" stroke-width="0.7" shape-rendering="auto"/><circle cx="3.5" cy="12.5" r="1.6" fill="#e8e8e8" stroke="#808080" stroke-width="0.7" shape-rendering="auto"/><circle cx="12.5" cy="12.5" r="1.6" fill="#e8e8e8" stroke="#808080" stroke-width="0.7" shape-rendering="auto"/><circle cx="8" cy="8" r="1.6" fill="#e8e8e8" stroke="#808080" stroke-width="0.7" shape-rendering="auto"/><rect x="7.5" y="7.5" width="1" height="1" fill="#ff0000" stroke="none" stroke-width="1"/></g>
<g transform="translate(582.6,105.5)" shape-rendering="crispEdges"><path d="M0.5 0V16M0 0.5H16M3.5 0V16M0 3.5H16M6.5 0V16M0 6.5H16M9.5 0V16M0 9.5H16M12.5 0V16M0 12.5H16M15.5 0V16M0 15.5H16" stroke="#9a9a9a" stroke-width="1" fill="none"/><rect x="0" y="0" width="1" height="1" fill="#ff0000" stroke="none" stroke-width="1"/><rect x="0" y="6" width="1" height="1" fill="#ff0000" stroke="none" stroke-width="1"/><rect x="0" y="12" width="1" height="1" fill="#ff0000" stroke="none" stroke-width="1"/><rect x="3" y="3" width="1" height="1" fill="#ff0000" stroke="none" stroke-width="1"/><rect x="3" y="9" width="1" height="1" fill="#ff0000" stroke="none" stroke-width="1"/><rect x="3" y="15" width="1" height="1" fill="#ff0000" stroke="none" stroke-width="1"/><rect x="6" y="0" width="1" height="1" fill="#ff0000" stroke="none" stroke-width="1"/><rect x="6" y="6" width="1" height="1" fill="#ff0000" stroke="none" stroke-width="1"/><rect x="6" y="12" width="1" height="1" fill="#ff0000" stroke="none" stroke-width="1"/><rect x="9" y="3" width="1" height="1" fill="#ff0000" stroke="none" stroke-width="1"/><rect x="9" y="9" width="1" height="1" fill="#ff0000" stroke="none" stroke-width="1"/><rect x="9" y="15" width="1" height="1" fill="#ff0000" stroke="none" stroke-width="1"/><rect x="12" y="0" width="1" height="1" fill="#ff0000" stroke="none" stroke-width="1"/><rect x="12" y="6" width="1" height="1" fill="#ff0000" stroke="none" stroke-width="1"/><rect x="12" y="12" width="1" height="1" fill="#ff0000" stroke="none" stroke-width="1"/><rect x="15" y="3" width="1" height="1" fill="#ff0000" stroke="none" stroke-width="1"/><rect x="15" y="9" width="1" height="1" fill="#ff0000" stroke="none" stroke-width="1"/><rect x="15" y="15" width="1" height="1" fill="#ff0000" stroke="none" stroke-width="1"/><circle cx="3.5" cy="3.5" r="1.6" fill="#e8e8e8" stroke="#808080" stroke-width="0.7" shape-rendering="auto"/><circle cx="12.5" cy="3.5" r="1.6" fill="#e8e8e8" stroke="#808080" stroke-width="0.7" shape-rendering="auto"/><circle cx="3.5" cy="12.5" r="1.6" fill="#e8e8e8" stroke="#808080" stroke-width="0.7" shape-rendering="auto"/><circle cx="12.5" cy="12.5" r="1.6" fill="#e8e8e8" stroke="#808080" stroke-width="0.7" shape-rendering="auto"/><circle cx="8" cy="8" r="1.6" fill="#e8e8e8" stroke="#808080" stroke-width="0.7" shape-rendering="auto"/><rect x="7.5" y="7.5" width="1" height="1" fill="#ff0000" stroke="none" stroke-width="1"/><path d="M0.5 0V15.5H16M0.5 0L-1 2.5M0.5 0L2 2.5M16 15.5L13.5 14M16 15.5L13.5 17" stroke="#000" stroke-width="1" fill="none"/></g>
<g transform="translate(605.4,106)" shape-rendering="crispEdges"><path d="M0.5 7L15 0.8M0.5 10.8L15 4.6M0.5 14.6L15 8.4" stroke="#404040" stroke-width="1" fill="none" shape-rendering="auto"/><path d="M0.6 4.5V15.5M11.5 0.5V14" stroke="#404040" stroke-width="1" fill="none"/></g>
<rect x="626" y="103" width="1" height="22" fill="#a0a0a0"/>
<rect x="627" y="103" width="1" height="22" fill="#ffffff"/>
<rect x="632" y="104" width="1" height="20" fill="#b0b0b0"/>
<g transform="translate(638.8,106)" shape-rendering="crispEdges"><path d="M0.5 1.5H9.5M0.5 4.5H9.5M0.5 7.5H9.5M0.5 10.5H9.5M0.5 13.5H14.5M9.5 0.5V14M0.5 1V14M5.5 1V14" stroke="#000" stroke-width="1" fill="none"/><path d="M12 1.5H14.5M12 4.6H14.5M12 7.6H14.5M12 10.6H14.5" stroke="#000" stroke-width="1" fill="none" stroke-dasharray="1 0.8"/><path d="M13.8 12.6L15.4 13.8L13.8 15" stroke="#000" stroke-width="1" fill="none"/></g>
<g transform="translate(661.5,106)" shape-rendering="crispEdges"><path d="M0 0.8H15.6M8 7H15.6M0 15.3H5.6" stroke="#ff0000" stroke-width="1" fill="none"/><path d="M4.8 15L8.6 1.2L11.8 4.4L15.4 1.2" stroke="#000" stroke-width="1" fill="none"/><text x="6" y="15.6" font-family="Liberation Sans" font-size="9.5" font-weight="normal" fill="#ff0000" textLength="9.6" lengthAdjust="spacingAndGlyphs">%</text></g>
<g transform="translate(0,0)" shape-rendering="crispEdges"><text x="685.6" y="120.2" font-family="Liberation Sans" font-size="16" font-weight="normal" fill="#000" textLength="12.6" lengthAdjust="spacingAndGlyphs">%</text></g>
<g transform="translate(707,106)" shape-rendering="crispEdges"><path d="M0 0.8H16M9.2 3.6H16M9.2 8.2H16M9.2 11.2H16M0 15.2H16" stroke="#000" stroke-width="1" fill="none"/><text x="0" y="13.4" font-family="Liberation Sans" font-size="10" font-weight="normal" fill="#ff0000" textLength="9.2" lengthAdjust="spacingAndGlyphs">%</text></g>
<g transform="translate(729.8,106)" shape-rendering="crispEdges"><circle cx="8" cy="7.6" r="7.3" fill="#f4f4f4" stroke="#a0a0a0" stroke-width="1.1"/><text class="cj" x="3" y="11.6" font-size="10" font-weight="bold" fill="#808000">金</text></g>
<g transform="translate(753,106)" shape-rendering="crispEdges"><path d="M0 0.8H15.8M8 3.6H15.8M9.4 9.4H15.8M0 15.2H15.8" stroke="#000" stroke-width="1" fill="none"/><text class="cj" x="0" y="13.8" font-size="9.5" font-weight="bold" fill="#808000">金</text></g>
<g transform="translate(776,106)" shape-rendering="crispEdges"><path d="M2.7 0V15.6M0.5 2.5H5M0.5 5.5H5M0.5 8.8H5M0.5 12H5M0 15.2H5.5" stroke="#000" stroke-width="1" fill="none"/><g transform="translate(3.2,0.5) scale(0.95)"><path d="M3.4 10.2L6.3 5.3L8 1.2L9.8 0.1L15 1.8L14.7 4.7L12.7 6.8L9.2 8.5L5.7 9.1z" fill="#c8c8c8" stroke="#000" stroke-width="1"/><path d="M9.2 0.2L12.7 1.2L13.6 0.1L15 1.8L14.7 4.7L12.7 5.2L9.8 2.2z" fill="#ff0000"/><path d="M8 1.4L13.2 5.8" stroke="#000" stroke-width="1.3"/><path d="M7.2 3.4L11.5 7.2" stroke="#fff" stroke-width="1"/><path d="M3.2 10.4L5.1 7L6.9 7.9L5.7 9.1z" fill="#ff0000"/></g></g>
<g transform="translate(799,106)" shape-rendering="crispEdges"><path d="M0 0.8H15.6M0 15.2H15.6" stroke="#ff0000" stroke-width="1" fill="none"/><path d="M0 7.7H15.6" stroke="#000" stroke-width="1" fill="none"/><path d="M1.5 11C3 2 5.5 2 7.5 7.7C9.5 13.5 12 13.5 14 4" stroke="#808080" stroke-width="1" fill="none"/></g>
<g transform="translate(822,106)" shape-rendering="crispEdges"><path d="M0 0.8H15.6M0 15.2H15.6" stroke="#ff0000" stroke-width="1" fill="none"/><text class="cj" x="2.8" y="12.6" font-size="10.5" font-weight="bold" fill="#808000">金</text></g>
<g transform="translate(845,106)" shape-rendering="crispEdges"><path d="M0 15L16 0.6M9.3 8.2H15M5 11.4H15M0.6 14.8H15" stroke="#000" stroke-width="1" fill="none"/><path d="M5.5 0.2V6.6C5.5 9.2 1 9.2 0.8 6.4" stroke="#ff0000" stroke-width="1" fill="none" shape-rendering="auto"/></g>
<g transform="translate(868.5,106)" shape-rendering="crispEdges"><path d="M0 15L16 0.6M9.3 8.2H15M5 11.4H15M0.6 14.8H15" stroke="#000" stroke-width="1" fill="none"/><path d="M1.2 9.6V1H7M1.2 5H6" stroke="#ff0000" stroke-width="2" fill="none"/></g>
<g transform="translate(891.3,106)" shape-rendering="crispEdges"><path d="M0 15L16 0.6M9.3 8.2H15M5 11.4H15M0.6 14.8H15" stroke="#000" stroke-width="1" fill="none"/><text class="cj" x="-0.4" y="9.6" font-size="10.4" font-weight="bold" fill="#808000">金</text></g>
<g transform="translate(914,106)" shape-rendering="crispEdges"><path d="M0 15L16 0.6M9.3 8.2H15M5 11.4H15M0.6 14.8H15" stroke="#000" stroke-width="1" fill="none"/><text class="cj" x="-0.4" y="10" font-size="11.2" font-weight="500" fill="#ff0000">神</text></g>
<g transform="translate(937,106)" shape-rendering="crispEdges"><path d="M0 15L16 0.6M9.3 8.2H15M5 11.4H15M0.6 14.8H15" stroke="#000" stroke-width="1" fill="none"/><text class="cj" x="-0.4" y="10.6" font-size="12" font-weight="500" fill="#ff0000">赢</text></g>
<g transform="translate(960,106)" shape-rendering="crispEdges"><path d="M0 15L16 0.6M9.3 8.2H15M5 11.4H15M0.6 14.8H15" stroke="#000" stroke-width="1" fill="none"/><text class="cj" x="-0.6" y="8.8" font-size="10.4" font-weight="500" fill="#ff0000">四</text></g>
<rect x="1203" y="127" width="1" height="553" fill="#9a9a9a"/>
<rect x="1204" y="127" width="1" height="553" fill="#7c7c7c"/>
<text x="33.70" y="136.80" font-family="Liberation Sans" font-size="9.5" fill="#a4a4a4" textLength="20.6" lengthAdjust="spacingAndGlyphs">09-17</text>
<text x="92.70" y="136.80" font-family="Liberation Sans" font-size="9.5" fill="#a4a4a4" textLength="20.6" lengthAdjust="spacingAndGlyphs">10-08</text>
<text x="162.70" y="136.80" font-family="Liberation Sans" font-size="9.5" fill="#a4a4a4" textLength="20.6" lengthAdjust="spacingAndGlyphs">10-22</text>
<text x="232.70" y="136.80" font-family="Liberation Sans" font-size="9.5" fill="#a4a4a4" textLength="19.6" lengthAdjust="spacingAndGlyphs">11-05</text>
<text x="302.70" y="136.80" font-family="Liberation Sans" font-size="9.5" fill="#a4a4a4" textLength="18.6" lengthAdjust="spacingAndGlyphs">11-19</text>
<text x="372.70" y="136.80" font-family="Liberation Sans" font-size="9.5" fill="#a4a4a4" textLength="20.6" lengthAdjust="spacingAndGlyphs">12-03</text>
<text x="442.70" y="136.80" font-family="Liberation Sans" font-size="9.5" fill="#a4a4a4" textLength="19.6" lengthAdjust="spacingAndGlyphs">12-17</text>
<text x="512.70" y="136.80" font-family="Liberation Sans" font-size="9.5" fill="#a4a4a4" textLength="19.6" lengthAdjust="spacingAndGlyphs">12-31</text>
<text x="582.70" y="136.80" font-family="Liberation Sans" font-size="9.5" fill="#a4a4a4" textLength="19.6" lengthAdjust="spacingAndGlyphs">01-16</text>
<text x="652.70" y="136.80" font-family="Liberation Sans" font-size="9.5" fill="#a4a4a4" textLength="20.6" lengthAdjust="spacingAndGlyphs">01-30</text>
<text x="722.70" y="136.80" font-family="Liberation Sans" font-size="9.5" fill="#a4a4a4" textLength="20.6" lengthAdjust="spacingAndGlyphs">02-13</text>
<text x="792.70" y="136.80" font-family="Liberation Sans" font-size="9.5" fill="#a4a4a4" textLength="21.7" lengthAdjust="spacingAndGlyphs">03-06</text>
<text x="862.70" y="136.80" font-family="Liberation Sans" font-size="9.5" fill="#a4a4a4" textLength="21.7" lengthAdjust="spacingAndGlyphs">03-20</text>
<text x="932.70" y="136.80" font-family="Liberation Sans" font-size="9.5" fill="#a4a4a4" textLength="21.7" lengthAdjust="spacingAndGlyphs">04-03</text>
<text x="1002.70" y="136.80" font-family="Liberation Sans" font-size="9.5" fill="#a4a4a4" textLength="21.7" lengthAdjust="spacingAndGlyphs">04-20</text>
<text x="1072.70" y="136.80" font-family="Liberation Sans" font-size="9.5" fill="#a4a4a4" textLength="21.7" lengthAdjust="spacingAndGlyphs">05-04</text>
<text x="1142.70" y="136.80" font-family="Liberation Sans" font-size="9.5" fill="#a4a4a4" textLength="20.6" lengthAdjust="spacingAndGlyphs">05-18</text>
<rect x="33" y="139" width="1170" height="1" fill="#a0a0a0"/>
<text class="cj" x="33.5" y="151.6" font-size="12" font-weight="500" fill="#000">乾坤</text>
<text x="57.60" y="151.80" font-family="Liberation Mono" font-size="13" fill="#000" textLength="7.6" lengthAdjust="spacingAndGlyphs" font-weight="bold">K</text>
<text class="cj" x="66.0" y="151.6" font-size="12" font-weight="500" fill="#000">线</text>
<text class="cj" x="102.0" y="152.6" font-size="12" fill="#ff0000">关注线</text>
<text x="138.00" y="152.60" font-family="Liberation Sans" font-size="12" fill="#ff0000" textLength="39.5" lengthAdjust="spacingAndGlyphs">=3259.1</text>
<text class="cj" x="181.0" y="152.6" font-size="12" fill="#008080">出局线</text>
<text x="217.00" y="152.60" font-family="Liberation Sans" font-size="12" fill="#008080" textLength="39.5" lengthAdjust="spacingAndGlyphs">=3331.8</text>
<text x="1103.60" y="151.80" font-family="Liberation Mono" font-size="12.5" fill="#0000ff" textLength="38.4" lengthAdjust="spacingAndGlyphs">1A0001</text>
<text class="cj" x="1152.2" y="152.0" font-size="12.4" fill="#0000ff" stroke="#0000ff" stroke-width="0.19">上证指数</text>
<path fill="none" stroke="#ff0000" stroke-width="1.05" stroke-linejoin="round" d="M36.2 518.6C41.4 517.8 56.0 515.3 67.4 513.6C78.8 511.9 92.3 510.1 104.7 508.4C117.1 506.7 133.7 504.6 142.0 503.6C150.3 502.6 150.3 502.7 154.5 502.4C158.7 502.1 163.6 501.8 167.0 501.6C170.4 501.4 162.5 501.2 175.0 501.1C187.5 501.0 227.3 501.4 242.0 501.1C256.7 500.9 255.8 500.2 263.0 499.6C270.2 499.0 278.8 498.3 285.0 497.4C291.2 496.5 292.0 495.8 300.0 494.1C308.0 492.5 322.0 489.5 333.0 487.5C344.0 485.5 357.7 483.5 366.0 481.9C374.3 480.2 377.4 479.4 383.0 477.6C388.6 475.8 394.1 473.4 399.6 470.9C405.1 468.4 410.4 465.5 416.0 462.6C421.6 459.7 427.4 456.7 433.0 453.3C438.6 449.9 443.9 446.0 449.4 442.0C454.9 438.0 460.5 433.7 466.0 429.4C471.5 425.1 477.1 420.0 482.6 416.1C488.1 412.2 493.4 409.5 499.0 406.2C504.6 402.9 510.4 399.5 516.0 396.2C521.6 392.9 524.1 390.8 532.4 386.3C540.7 381.8 554.5 374.5 565.6 369.0C576.7 363.5 590.3 356.9 599.0 353.1C607.7 349.3 612.5 348.2 618.0 346.3C623.5 344.4 625.2 343.1 632.0 341.5C638.8 339.9 650.7 337.6 659.0 336.4C667.3 335.2 675.0 334.5 681.8 334.1C688.6 333.8 692.8 333.7 700.0 334.3C707.2 334.9 716.7 336.2 725.0 337.7C733.3 339.2 743.7 342.0 750.0 343.2C756.3 344.4 758.7 344.3 763.0 344.9C767.3 345.5 769.8 346.3 776.0 346.6C782.2 346.9 793.3 346.7 800.0 346.6C806.7 346.5 810.5 346.4 816.0 345.9C821.5 345.4 827.5 344.4 833.0 343.6C838.5 342.8 843.5 342.2 849.0 340.9C854.5 339.6 860.4 337.9 866.0 335.9C871.6 333.8 877.1 331.4 882.6 328.6C888.1 325.8 890.8 324.4 899.0 319.3C907.2 314.2 920.9 305.3 932.0 297.8C943.1 290.3 957.3 280.6 965.6 274.5C973.9 268.4 976.4 265.9 982.0 261.3C987.6 256.7 993.4 251.6 999.0 247.0C1004.6 242.4 1009.9 238.0 1015.4 233.7C1020.9 229.4 1026.5 225.3 1032.0 221.4C1037.5 217.5 1043.1 213.8 1048.6 210.5C1054.1 207.2 1059.4 204.3 1065.0 201.5C1070.6 198.7 1076.2 196.3 1082.0 193.9C1087.8 191.5 1095.2 188.8 1100.0 187.2C1104.8 185.6 1106.0 185.4 1110.5 184.4C1115.0 183.4 1121.6 182.2 1127.0 181.4C1132.4 180.6 1137.5 179.9 1143.0 179.5C1148.5 179.1 1157.2 179.0 1160.0 178.9"/>
<path d="M217 505.5 L197.5 512.5 M197.5 512.5 l1 -2.5 M197.5 512.5 l2.6 0.6" stroke="#0000ff" stroke-width="1" fill="none" shape-rendering="crispEdges"/>
<path fill="#ff0000" d="M32 508h8v2h-8zM36 508h1v5h-1zM39 507h8v2h-8zM43 507h1v3h-1zM46 504h8v3h-8zM53 505h8v6h-8zM57 505h1v7h-1zM60 507h8v4h-8zM67 502h8v6h-8zM71 501h1v9h-1zM74 500h8v1h-8zM78 498h1v5h-1zM81 501h8v1h-8zM85 500h1v4h-1zM88 499h8v1h-8zM92 498h1v3h-1zM95 498h8v1h-8zM99 498h1v2h-1zM102 495h8v2h-8zM106 495h1v5h-1zM109 493h8v1h-8zM113 493h1v4h-1zM116 495h8v1h-8zM120 494h1v4h-1zM123 497h8v1h-8zM127 497h1v5h-1zM130 498h8v1h-8zM134 495h1v6h-1zM137 496h8v2h-8zM141 496h1v4h-1zM144 497h8v1h-8zM148 493h1v7h-1zM158 499h8v2h-8zM214 493h8v4h-8zM221 488h8v5h-8zM228 486h8v1h-8zM232 485h1v3h-1zM235 486h8v1h-8zM239 485h1v3h-1zM242 486h8v1h-8zM249 487h8v1h-8zM253 487h1v3h-1zM256 486h8v2h-8zM260 482h1v7h-1zM263 478h8v7h-8zM270 476h8v3h-8zM274 472h1v12h-1zM277 474h8v8h-8zM281 474h1v9h-1zM284 475h8v1h-8zM288 472h1v7h-1zM291 477h8v1h-8zM295 477h1v3h-1zM298 472h8v6h-8zM305 478h8v2h-8zM309 478h1v3h-1zM319 482h8v2h-8zM323 482h1v3h-1zM326 476h8v6h-8zM330 475h1v7h-1zM333 467h8v5h-8zM337 465h1v9h-1zM340 461h8v7h-8zM347 455h8v5h-8zM351 454h1v7h-1zM354 450h8v3h-8zM358 450h1v5h-1zM361 440h8v10h-8zM365 440h1v11h-1zM368 439h8v1h-8zM372 434h1v9h-1zM375 426h8v17h-8zM379 423h1v20h-1zM382 423h8v2h-8zM386 415h1v16h-1zM389 401h8v21h-8zM393 401h1v23h-1zM396 394h8v2h-8zM400 387h1v30h-1zM403 379h8v21h-8zM407 376h1v29h-1zM410 384h8v25h-8zM414 367h1v45h-1zM417 394h8v15h-8zM421 393h1v25h-1zM424 396h8v3h-8zM428 389h1v10h-1zM431 394h8v2h-8zM435 390h1v6h-1zM438 391h8v6h-8zM442 390h1v13h-1zM445 379h8v12h-8zM452 372h8v5h-8zM456 369h1v15h-1zM459 372h8v1h-8zM463 367h1v11h-1zM466 363h8v10h-8zM470 363h1v17h-1zM480 368h8v9h-8zM484 358h1v20h-1zM487 376h8v12h-8zM491 376h1v18h-1zM494 370h8v14h-8zM498 370h1v19h-1zM501 355h8v14h-8zM505 353h1v18h-1zM508 345h8v8h-8zM512 343h1v17h-1zM515 353h8v1h-8zM519 349h1v11h-1zM522 341h8v11h-8zM526 340h1v14h-1zM529 320h8v16h-8zM533 316h1v21h-1zM536 320h8v3h-8zM540 312h1v16h-1zM543 316h8v8h-8zM547 315h1v12h-1zM550 316h8v14h-8zM554 314h1v18h-1zM557 332h8v1h-8zM561 310h1v24h-1zM564 336h8v6h-8zM568 333h1v15h-1zM571 341h8v2h-8zM575 336h1v8h-1zM578 339h8v4h-8zM582 335h1v13h-1zM585 322h8v21h-8zM589 322h1v24h-1zM592 315h8v6h-8zM596 311h1v11h-1zM620 321h8v3h-8zM624 319h1v11h-1zM627 319h8v1h-8zM631 310h1v14h-1zM634 314h8v6h-8zM638 314h1v11h-1zM641 313h8v6h-8zM645 313h1v17h-1zM648 324h8v4h-8zM652 319h1v11h-1zM746 338h8v3h-8zM750 337h1v4h-1zM767 327h8v2h-8zM771 324h1v7h-1zM774 322h8v1h-8zM778 322h1v6h-1zM781 326h8v10h-8zM788 332h8v2h-8zM792 331h1v7h-1zM795 335h8v3h-8zM799 335h1v8h-1zM802 338h8v2h-8zM806 336h1v5h-1zM823 331h8v1h-8zM827 324h1v8h-1zM830 320h8v6h-8zM834 318h1v11h-1zM837 316h8v2h-8zM841 312h1v7h-1zM844 302h8v10h-8zM848 302h1v13h-1zM851 292h8v6h-8zM855 292h1v8h-1zM858 279h8v12h-8zM862 279h1v13h-1zM865 278h8v1h-8zM869 275h1v9h-1zM872 272h8v5h-8zM876 269h1v11h-1zM879 259h8v8h-8zM883 259h1v9h-1zM893 260h8v4h-8zM897 258h1v10h-1zM900 260h8v7h-8zM904 255h1v17h-1zM907 258h8v1h-8zM911 255h1v9h-1zM914 241h8v13h-8zM918 239h1v15h-1zM921 234h8v14h-8zM925 232h1v18h-1zM928 237h8v11h-8zM932 235h1v14h-1zM942 227h8v11h-8zM946 227h1v13h-1zM949 209h8v12h-8zM953 209h1v13h-1zM956 203h8v4h-8zM960 202h1v18h-1zM963 201h8v9h-8zM967 199h1v22h-1zM970 196h8v16h-8zM974 195h1v20h-1zM977 180h8v9h-8zM981 179h1v13h-1zM984 178h8v2h-8zM988 172h1v14h-1z"/>
<path fill="#800080" d="M151 500h8v1h-8zM155 499h1v8h-1zM165 500h8v2h-8zM172 502h8v3h-8zM207 496h8v5h-8zM211 495h1v6h-1zM599 349h8v13h-8zM603 336h1v30h-1zM606 352h8v10h-8zM610 349h1v16h-1zM613 325h8v24h-8zM617 322h1v29h-1zM662 334h8v11h-8zM666 331h1v14h-1zM753 337h8v5h-8zM757 337h1v7h-1zM760 329h8v14h-8zM764 329h1v18h-1zM809 328h8v15h-8zM813 327h1v20h-1z"/>
<path fill="#0000ff" d="M179 505h8v4h-8zM183 505h1v5h-1zM200 503h8v8h-8zM669 356h8v4h-8zM673 351h1v10h-1zM676 346h8v9h-8zM680 346h1v14h-1zM683 345h8v7h-8zM687 340h1v12h-1zM690 338h8v20h-8zM694 338h1v21h-1zM697 361h8v7h-8zM701 360h1v14h-1zM704 366h8v6h-8zM708 362h1v12h-1zM711 358h8v9h-8zM715 358h1v10h-1zM718 355h8v3h-8zM722 353h1v5h-1zM725 352h8v3h-8zM729 350h1v8h-1zM732 346h8v3h-8zM736 340h1v10h-1zM739 343h8v3h-8zM743 342h1v6h-1z"/>
<rect x="187" y="509" width="6" height="1" fill="#008000"/>
<rect x="190" y="507" width="1" height="2" fill="#0000ff"/>
<rect x="194" y="511" width="6" height="1" fill="#008000"/>
<rect x="313" y="482" width="6" height="1" fill="#008000"/>
<rect x="316" y="480" width="1" height="4" fill="#ff0000"/>
<rect x="474" y="360" width="6" height="1" fill="#008000"/>
<rect x="477" y="349" width="1" height="18" fill="#ff0000"/>
<rect x="817" y="331" width="6" height="1" fill="#008000"/>
<rect x="820" y="327" width="1" height="5" fill="#ff0000"/>
<rect x="887" y="258" width="6" height="1" fill="#008000"/>
<rect x="890" y="254" width="1" height="21" fill="#ff0000"/>
<rect x="936" y="234" width="6" height="1" fill="#008000"/>
<rect x="939" y="232" width="1" height="11" fill="#ff0000"/>
<rect x="659" y="331" width="1" height="10" fill="#800080"/>
<path fill="none" stroke="#008080" stroke-width="1.05" stroke-linejoin="round" d="M36.0 506.5C37.2 506.5 44.1 506.5 46.0 506.5C47.9 506.5 50.4 506.1 52.0 506.2C53.6 506.3 58.2 507.3 60.0 507.4C61.8 507.5 65.2 507.4 67.0 507.4C68.8 507.4 73.2 507.2 75.0 507.0C76.8 506.8 79.0 506.0 82.0 505.5C85.0 505.0 97.5 503.8 101.0 503.0C104.5 502.2 109.4 498.9 112.0 498.4C114.6 497.9 120.9 498.6 123.0 498.4C125.1 498.2 127.4 497.3 130.0 497.1C132.6 496.9 142.4 496.3 145.0 496.4C147.6 496.5 149.6 497.7 152.0 498.0C154.4 498.3 163.9 498.7 166.0 498.9C168.1 499.1 168.1 499.2 170.0 499.6C171.9 500.0 179.6 501.6 182.5 502.3C185.4 503.0 192.1 505.1 195.0 505.5C197.9 505.9 204.1 505.7 207.0 505.5C209.9 505.3 217.7 504.2 220.0 503.6C222.3 503.0 223.7 502.1 227.0 500.5C230.3 498.9 244.5 491.8 248.5 490.3C252.5 488.8 257.1 488.9 261.0 488.0C264.9 487.1 277.5 484.1 282.0 483.0C286.5 481.9 296.2 479.5 299.5 478.9C302.8 478.3 307.7 478.3 310.0 478.2C312.3 478.1 317.7 478.1 319.0 478.2C320.3 478.3 318.8 479.3 321.0 479.4C323.2 479.5 333.6 479.9 338.0 478.7C342.4 477.5 354.9 471.3 358.5 469.1C362.1 466.9 365.4 463.1 369.0 459.6C372.6 456.1 386.0 442.5 389.4 439.0C392.8 435.5 395.8 432.8 398.0 430.0C400.2 427.2 406.1 417.1 408.0 415.0C409.9 412.9 412.3 413.7 414.0 412.4C415.7 411.1 419.7 405.5 422.6 403.5C425.5 401.5 435.0 396.8 439.0 395.4C443.0 394.0 453.1 393.0 456.5 391.5C459.9 390.0 465.3 384.1 468.0 382.2C470.7 380.3 477.2 375.9 480.0 374.9C482.8 373.9 489.9 374.0 492.0 373.7C494.1 373.4 496.4 373.0 498.0 372.5C499.6 372.0 502.8 370.1 506.0 369.0C509.2 367.9 522.0 365.0 525.6 362.8C529.2 360.6 534.4 353.0 537.0 349.9C539.6 346.8 545.2 338.5 548.0 336.1C550.8 333.7 558.0 330.5 561.0 329.6C564.0 328.7 571.3 328.0 574.0 328.3C576.7 328.6 581.3 331.9 584.0 332.4C586.7 332.9 594.8 332.4 597.0 332.9C599.2 333.4 601.4 336.1 603.0 336.9C604.6 337.7 608.9 339.4 610.6 339.4C612.4 339.4 615.4 337.8 618.0 336.9C620.6 336.0 629.9 332.1 633.0 331.3C636.1 330.5 642.7 330.9 645.0 330.1C647.3 329.3 650.7 325.6 652.4 324.8C654.1 324.0 657.7 323.0 659.6 323.5C661.5 324.0 666.1 327.5 668.5 328.8C670.9 330.1 677.7 333.0 680.0 334.5C682.3 336.0 686.3 340.4 688.0 341.8C689.7 343.2 692.1 344.8 694.4 346.6C696.7 348.4 705.4 355.8 708.0 357.2C710.6 358.6 713.6 358.2 717.0 358.3C720.4 358.4 733.2 359.0 737.0 358.3C740.8 357.6 746.2 354.0 749.4 352.3C752.6 350.6 761.3 345.9 764.6 343.9C767.9 341.9 775.6 336.3 778.0 335.3C780.4 334.3 783.4 335.3 785.0 335.0C786.6 334.7 788.5 332.8 792.0 332.5C795.5 332.2 810.7 332.3 814.7 332.5C818.7 332.7 823.5 334.5 826.0 334.5C828.5 334.5 833.5 333.5 836.0 332.5C838.5 331.5 843.9 328.7 847.0 326.1C850.1 323.5 859.2 314.1 863.0 309.9C866.8 305.7 876.2 294.3 879.4 290.5C882.5 286.7 888.3 279.3 890.0 277.5C891.7 275.7 892.3 276.3 894.3 275.0C896.3 273.7 904.2 268.0 907.0 266.1C909.8 264.2 914.5 261.0 918.5 258.9C922.5 256.8 937.4 250.2 941.0 248.3C944.6 246.4 946.5 245.1 949.0 242.7C951.5 240.3 959.0 231.1 962.0 228.1C965.0 225.1 972.1 219.6 975.0 216.8C977.9 214.0 983.8 206.7 986.5 203.8C989.2 200.9 995.8 193.6 998.0 191.7C1000.2 189.8 1003.3 188.6 1005.0 187.6C1006.7 186.6 1011.4 184.2 1012.9 183.4C1014.4 182.6 1016.9 181.1 1018.0 180.6C1019.1 180.1 1021.1 179.1 1022.0 178.9C1022.9 178.7 1021.6 178.5 1026.0 178.5C1030.4 178.5 1039.9 178.5 1060.0 178.5C1080.1 178.5 1181.9 178.5 1198.0 178.5"/>
<text x="217.50" y="511.30" font-family="Liberation Sans" font-size="11.5" fill="#0000ff" textLength="58.5" lengthAdjust="spacingAndGlyphs">2279.8401</text>
<path d="M988.5 172.5 L1008 177.5" stroke="#0000ff" stroke-width="1" fill="none" shape-rendering="crispEdges"/>
<line x1="992" y1="178.5" x2="1022" y2="178.5" stroke="#808080" stroke-width="1" stroke-dasharray="5 2"/>
<text x="1008.60" y="188.00" font-family="Liberation Sans" font-size="11.5" fill="#0000ff" textLength="58.2" lengthAdjust="spacingAndGlyphs">4168.3501</text>
<rect x="1198" y="178" width="3" height="1" fill="#808080"/>
<line x1="33" y1="534.5" x2="1201" y2="534.5" stroke="#a0a0a0" stroke-width="1" stroke-dasharray="3 3"/>
<line x1="33" y1="551.5" x2="1201" y2="551.5" stroke="#a0a0a0" stroke-width="1" stroke-dasharray="3 3"/>
<line x1="33" y1="568.5" x2="1201" y2="568.5" stroke="#a0a0a0" stroke-width="1" stroke-dasharray="3 3"/>
<line x1="33" y1="585.5" x2="1201" y2="585.5" stroke="#a0a0a0" stroke-width="1" stroke-dasharray="3 3"/>
<text x="1.00" y="532.00" font-family="Liberation Sans" font-size="10.5" fill="#404040" textLength="29.5" lengthAdjust="spacingAndGlyphs">.2831</text>
<text x="1.00" y="555.00" font-family="Liberation Sans" font-size="10.5" fill="#404040" textLength="29.5" lengthAdjust="spacingAndGlyphs">98801</text>
<text x="1.00" y="572.00" font-family="Liberation Sans" font-size="10.5" fill="#404040" textLength="29.5" lengthAdjust="spacingAndGlyphs">99201</text>
<text x="1.00" y="589.00" font-family="Liberation Sans" font-size="10.5" fill="#404040" textLength="29.5" lengthAdjust="spacingAndGlyphs">99600</text>
<path fill="#008000" d="M54 587h6v15h-6zM75 582h6v20h-6zM117 582h6v20h-6zM124 584h6v18h-6zM131 585h6v17h-6zM145 580h6v22h-6zM152 583h6v19h-6zM166 587h6v15h-6zM173 589h6v13h-6zM180 588h6v14h-6zM187 590h6v12h-6zM194 591h6v11h-6zM243 579h6v23h-6zM257 576h6v26h-6zM271 566h6v36h-6zM285 576h6v26h-6zM299 583h6v19h-6zM306 584h6v18h-6zM313 586h6v16h-6zM369 563h6v39h-6zM411 534h6v68h-6zM460 564h6v38h-6zM474 542h6v60h-6zM481 563h6v39h-6zM488 569h6v33h-6zM509 557h6v45h-6zM551 569h6v33h-6zM565 574h6v28h-6zM579 581h6v21h-6zM600 567h6v35h-6zM628 570h6v32h-6zM642 569h6v33h-6zM649 575h6v27h-6zM663 579h6v23h-6zM670 580h6v22h-6zM684 580h6v22h-6zM691 575h6v27h-6zM698 580h6v22h-6zM754 581h6v21h-6zM782 568h6v34h-6zM796 574h6v28h-6zM803 577h6v25h-6zM817 577h6v25h-6zM887 546h6v56h-6zM894 556h6v46h-6zM922 553h6v49h-6zM936 560h6v42h-6zM964 550h6v52h-6z"/>
<path fill="none" stroke="#ff0000" stroke-width="1" d="M33.5 583.5h5v18h-5zM40.5 585.5h5v16h-5zM47.5 587.5h5v14h-5zM61.5 588.5h5v13h-5zM68.5 582.5h5v19h-5zM82.5 587.5h5v14h-5zM89.5 584.5h5v17h-5zM96.5 585.5h5v16h-5zM103.5 584.5h5v17h-5zM110.5 581.5h5v20h-5zM138.5 584.5h5v17h-5zM159.5 588.5h5v13h-5zM201.5 586.5h5v15h-5zM208.5 579.5h5v22h-5zM215.5 576.5h5v25h-5zM222.5 573.5h5v28h-5zM229.5 576.5h5v25h-5zM236.5 575.5h5v26h-5zM250.5 582.5h5v19h-5zM264.5 576.5h5v25h-5zM278.5 580.5h5v21h-5zM292.5 583.5h5v18h-5zM320.5 587.5h5v14h-5zM327.5 583.5h5v18h-5zM334.5 570.5h5v31h-5zM341.5 574.5h5v27h-5zM348.5 572.5h5v29h-5zM355.5 570.5h5v31h-5zM362.5 561.5h5v40h-5zM376.5 563.5h5v38h-5zM383.5 552.5h5v49h-5zM390.5 555.5h5v46h-5zM397.5 546.5h5v55h-5zM404.5 550.5h5v51h-5zM418.5 557.5h5v44h-5zM425.5 559.5h5v42h-5zM432.5 566.5h5v35h-5zM439.5 567.5h5v34h-5zM446.5 562.5h5v39h-5zM453.5 554.5h5v47h-5zM467.5 556.5h5v45h-5zM495.5 569.5h5v32h-5zM502.5 561.5h5v40h-5zM516.5 567.5h5v34h-5zM523.5 566.5h5v35h-5zM530.5 555.5h5v46h-5zM537.5 558.5h5v43h-5zM544.5 567.5h5v34h-5zM558.5 566.5h5v35h-5zM572.5 582.5h5v19h-5zM586.5 577.5h5v24h-5zM593.5 572.5h5v29h-5zM607.5 571.5h5v30h-5zM614.5 566.5h5v35h-5zM621.5 571.5h5v30h-5zM635.5 574.5h5v27h-5zM656.5 578.5h5v23h-5zM677.5 580.5h5v21h-5zM705.5 584.5h5v17h-5zM712.5 585.5h5v16h-5zM719.5 587.5h5v14h-5zM726.5 585.5h5v16h-5zM733.5 579.5h5v22h-5zM740.5 582.5h5v19h-5zM747.5 582.5h5v19h-5zM761.5 575.5h5v26h-5zM768.5 576.5h5v25h-5zM775.5 571.5h5v30h-5zM789.5 576.5h5v25h-5zM810.5 574.5h5v27h-5zM824.5 577.5h5v24h-5zM831.5 571.5h5v30h-5zM838.5 573.5h5v28h-5zM845.5 567.5h5v34h-5zM852.5 556.5h5v45h-5zM859.5 554.5h5v47h-5zM866.5 556.5h5v45h-5zM873.5 556.5h5v45h-5zM880.5 556.5h5v45h-5zM901.5 560.5h5v41h-5zM908.5 566.5h5v35h-5zM915.5 552.5h5v49h-5zM929.5 564.5h5v37h-5zM943.5 560.5h5v41h-5zM950.5 552.5h5v49h-5zM957.5 548.5h5v53h-5zM971.5 560.5h5v41h-5zM978.5 550.5h5v51h-5zM985.5 548.5h5v53h-5z"/>
<rect x="0" y="602" width="1203" height="1" fill="#989898"/>
<rect x="0" y="603" width="1203" height="1" fill="#8c8c8c"/>
<line x1="33" y1="623.5" x2="1201" y2="623.5" stroke="#a0a0a0" stroke-width="1" stroke-dasharray="3 3"/>
<line x1="33" y1="638.5" x2="1201" y2="638.5" stroke="#a0a0a0" stroke-width="1" stroke-dasharray="3 3"/>
<line x1="33" y1="653.5" x2="1201" y2="653.5" stroke="#a0a0a0" stroke-width="1" stroke-dasharray="3 3"/>
<line x1="33" y1="668.5" x2="1201" y2="668.5" stroke="#a0a0a0" stroke-width="1" stroke-dasharray="3 3"/>
<text x="0.50" y="627.00" font-family="Liberation Mono" font-size="11" fill="#404040" textLength="30" lengthAdjust="spacingAndGlyphs">12.50</text>
<text x="0.50" y="642.00" font-family="Liberation Mono" font-size="11" fill="#404040" textLength="30" lengthAdjust="spacingAndGlyphs">84.37</text>
<text x="0.50" y="657.50" font-family="Liberation Mono" font-size="11" fill="#404040" textLength="30" lengthAdjust="spacingAndGlyphs">56.25</text>
<text x="0.50" y="672.50" font-family="Liberation Mono" font-size="11" fill="#404040" textLength="30" lengthAdjust="spacingAndGlyphs">28.12</text>
<text class="cj" x="-8.5" y="615.6" font-size="12" fill="#0000ff" stroke="#0000ff" stroke-width="0.1">买卖</text>
<line x1="659.5" y1="604" x2="659.5" y2="680" stroke="#000" stroke-width="1" stroke-dasharray="3 3"/>
<path fill="none" stroke="#008000" stroke-width="1" d="M132.5 637.5h3v2h-3zM146.5 639.5h3v2h-3zM153.5 642.5h3v3h-3zM160.5 643.5h3v3h-3zM167.5 646.5h3v4h-3zM174.5 650.5h3v7h-3zM181.5 655.5h3v10h-3zM188.5 660.5h3v8h-3zM195.5 665.5h3v7h-3zM314.5 639.5h3v4h-3zM321.5 642.5h3v4h-3zM419.5 636.5h3v2h-3zM426.5 638.5h3v2h-3zM433.5 639.5h3v2h-3zM489.5 640.5h3v4h-3zM496.5 642.5h3v2h-3zM566.5 639.5h3v2h-3zM580.5 643.5h3v2h-3zM601.5 645.5h3v6h-3zM608.5 650.5h3v7h-3zM664.5 647.5h3v4h-3zM671.5 652.5h3v8h-3zM678.5 655.5h3v6h-3zM685.5 659.5h3v4h-3zM692.5 661.5h3v6h-3zM699.5 666.5h3v5h-3zM706.5 668.5h3v4h-3zM713.5 669.5h3v2h-3zM1084.5 639.5h3v4h-3zM1091.5 642.5h3v5h-3zM1098.5 646.5h3v3h-3zM1105.5 648.5h3v3h-3zM1112.5 649.5h3v4h-3zM1119.5 651.5h3v2h-3z"/>
<path fill="none" stroke="#ff8080" stroke-width="1" d="M97.5 636.5h3v3h-3zM104.5 634.5h3v3h-3zM111.5 633.5h3v2h-3zM209.5 657.5h3v4h-3zM216.5 649.5h3v7h-3zM223.5 643.5h3v8h-3zM230.5 639.5h3v8h-3zM237.5 637.5h3v7h-3zM244.5 636.5h3v5h-3zM251.5 636.5h3v3h-3zM342.5 638.5h3v2h-3zM349.5 635.5h3v3h-3zM356.5 633.5h3v3h-3zM468.5 634.5h3v2h-3zM524.5 636.5h3v2h-3zM531.5 635.5h3v2h-3zM636.5 642.5h3v3h-3zM741.5 662.5h3v3h-3zM748.5 658.5h3v4h-3zM755.5 654.5h3v5h-3zM762.5 645.5h3v9h-3zM769.5 641.5h3v8h-3zM776.5 637.5h3v8h-3zM783.5 639.5h3v4h-3zM839.5 637.5h3v2h-3zM846.5 635.5h3v2h-3zM853.5 633.5h3v3h-3zM860.5 632.5h3v2h-3z"/>
<path fill="#008000" d="M55 644h3v1h-3zM62 644h3v2h-3zM126 636h2v1h-2zM139 638h3v1h-3zM202 665h3v2h-3zM307 637h3v2h-3zM328 644h3v1h-3zM412 636h3v2h-3zM440 640h3v2h-3zM482 637h3v2h-3zM559 637h3v2h-3zM573 642h3v2h-3zM615 652h3v1h-3zM657 645h3v2h-3zM805 643h2v1h-2zM896 632h2v1h-2zM924 633h2v1h-2zM965 632h3v1h-3zM1007 632h3v1h-3zM1014 632h3v1h-3zM1036 633h2v1h-2zM1043 633h2v1h-2zM1049 633h3v1h-3zM1057 634h2v1h-2zM1070 635h3v1h-3zM1077 636h3v2h-3zM1126 653h3v1h-3zM1133 654h3v1h-3zM1140 654h3v2h-3zM1148 655h2v1h-2zM1155 655h2v1h-2z"/>
<path fill="#ff8080" d="M48 640h3v2h-3zM69 642h3v1h-3zM76 642h3v1h-3zM83 641h3v1h-3zM90 639h3v2h-3zM118 635h3v1h-3zM259 638h2v1h-2zM265 636h3v2h-3zM272 636h3v1h-3zM279 635h3v1h-3zM286 635h3v1h-3zM335 641h3v1h-3zM363 632h3v2h-3zM371 634h2v1h-2zM378 633h2v1h-2zM392 633h2v1h-2zM454 638h3v1h-3zM462 637h2v1h-2zM475 635h3v1h-3zM510 640h3v1h-3zM517 639h3v1h-3zM538 636h3v1h-3zM545 635h3v1h-3zM594 640h3v2h-3zM622 649h3v1h-3zM629 646h3v2h-3zM643 642h3v2h-3zM651 643h2v1h-2zM728 668h2v1h-2zM734 666h3v2h-3zM790 640h3v2h-3zM811 641h3v1h-3zM832 639h3v1h-3zM867 632h3v1h-3zM875 632h2v1h-2zM881 631h3v2h-3zM951 631h3v1h-3zM958 631h3v1h-3zM979 631h3v1h-3z"/>
<text class="cj" x="127.6" y="633.4" font-size="12" fill="#008000" stroke="#008000" stroke-width="0.36">卖</text>
<text class="cj" x="302.8" y="633.4" font-size="12" fill="#008000" stroke="#008000" stroke-width="0.36">卖</text>
<text class="cj" x="414.8" y="633.4" font-size="12" fill="#008000" stroke="#008000" stroke-width="0.36">卖</text>
<text class="cj" x="484.8" y="633.4" font-size="12" fill="#008000" stroke="#008000" stroke-width="0.36">卖</text>
<text class="cj" x="554.8" y="633.4" font-size="12" fill="#008000" stroke="#008000" stroke-width="0.36">卖</text>
<text class="cj" x="806.8" y="633.4" font-size="12" fill="#008000" stroke="#008000" stroke-width="0.36">卖</text>
<text class="cj" x="897.6" y="633.4" font-size="12" fill="#008000" stroke="#008000" stroke-width="0.36">卖</text>
<text class="cj" x="926.4" y="633.4" font-size="12" fill="#008000" stroke="#008000" stroke-width="0.36">卖</text>
<text class="cj" x="967.6" y="633.4" font-size="12" fill="#008000" stroke="#008000" stroke-width="0.36">卖</text>
<text class="cj" x="988.4" y="633.4" font-size="12" fill="#008000" stroke="#008000" stroke-width="0.36">卖</text>
</svg>
</body></html>
